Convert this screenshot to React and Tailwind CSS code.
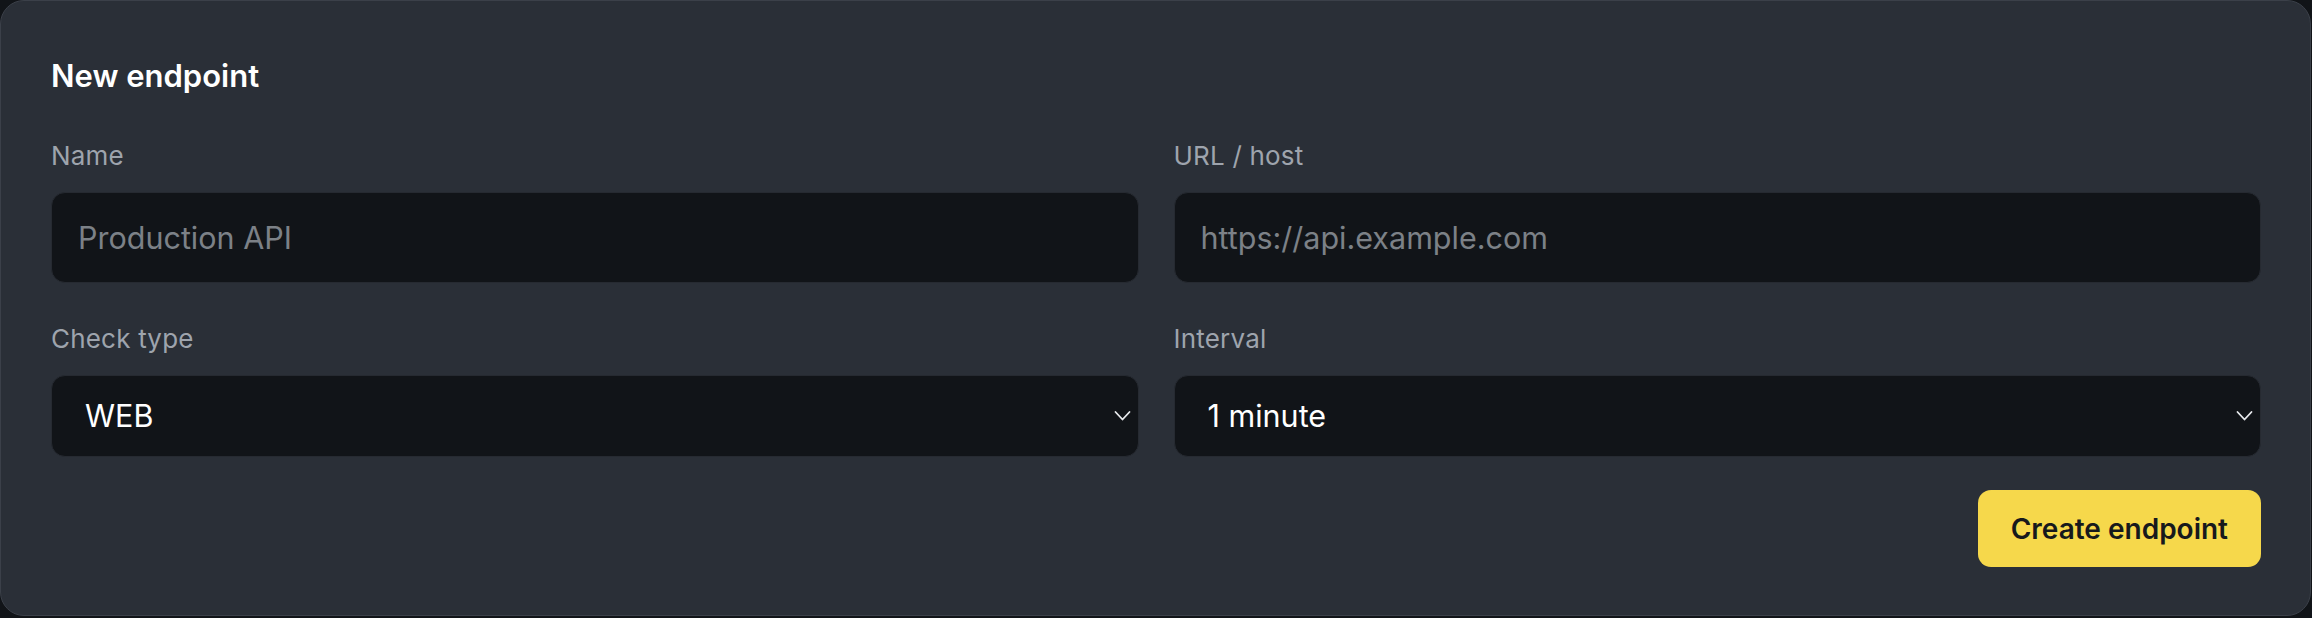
import { useState } from 'react'

const CHECK_TYPES = ['WEB', 'TCP', 'PING', 'DNS']
const INTERVALS = ['1 minute', '5 minutes', '15 minutes', '1 hour']

function Chevron() {
  return (
    <svg
      width="17"
      height="11"
      viewBox="0 0 17 11"
      className="pointer-events-none absolute right-[8px] top-1/2 -translate-y-1/2"
    >
      <polyline
        points="1.5,1.5 8.5,9 15.5,1.5"
        fill="none"
        stroke="#e8eaed"
        strokeWidth="1.8"
        strokeLinecap="round"
        strokeLinejoin="round"
      />
    </svg>
  )
}

function Field({ label, children }) {
  return (
    <div className="flex flex-col">
      <label className="mb-[21px] text-[26px] leading-[30px] tracking-[0.2px] text-[#9ea4ad]">{label}</label>
      {children}
    </div>
  )
}

export default function App() {
  const [name, setName] = useState('')
  const [url, setUrl] = useState('')
  const [checkType, setCheckType] = useState('WEB')
  const [interval, setInterval] = useState('1 minute')

  const inputClass =
    'h-[91px] w-full rounded-[14px] border border-[#262a31] bg-[#111418] pl-[26px] text-[30.5px] text-white placeholder:text-[#7c8187] outline-none'
  const selectClass =
    'h-[82px] w-full appearance-none rounded-[14px] border border-[#262a31] bg-[#111418] pl-[33px] text-[30.5px] text-white outline-none'

  return (
    <div className="min-h-[618px] bg-[#111418] font-['Inter',sans-serif]">
      <div className="mr-[1px] rounded-[24px] border border-[#3b4049] bg-[#2a2f37] pl-[50px] pr-[49px] pt-[57px] pb-[48px]">
        <h2 className="text-[31px] leading-[36px] font-semibold text-white">New endpoint</h2>

        <div className="mt-[47px] grid grid-cols-2 gap-x-[35px] gap-y-[41px]">
          <Field label="Name">
            <input
              className={inputClass}
              placeholder="Production API"
              value={name}
              onChange={(e) => setName(e.target.value)}
            />
          </Field>
          <Field label="URL / host">
            <input
              className={inputClass}
              placeholder="https://api.example.com"
              value={url}
              onChange={(e) => setUrl(e.target.value)}
            />
          </Field>
          <Field label="Check type">
            <div className="relative">
              <select
                className={selectClass}
                value={checkType}
                onChange={(e) => setCheckType(e.target.value)}
              >
                {CHECK_TYPES.map((t) => (
                  <option key={t}>{t}</option>
                ))}
              </select>
              <Chevron />
            </div>
          </Field>
          <Field label="Interval">
            <div className="relative">
              <select
                className={selectClass}
                value={interval}
                onChange={(e) => setInterval(e.target.value)}
              >
                {INTERVALS.map((t) => (
                  <option key={t}>{t}</option>
                ))}
              </select>
              <Chevron />
            </div>
          </Field>
        </div>

        <div className="mt-[33px] flex justify-end">
          <button className="h-[77px] rounded-[13px] bg-[#f6d84b] px-[33px] text-[28px] font-semibold text-[#17191c]">
            Create endpoint
          </button>
        </div>
      </div>
    </div>
  )
}
